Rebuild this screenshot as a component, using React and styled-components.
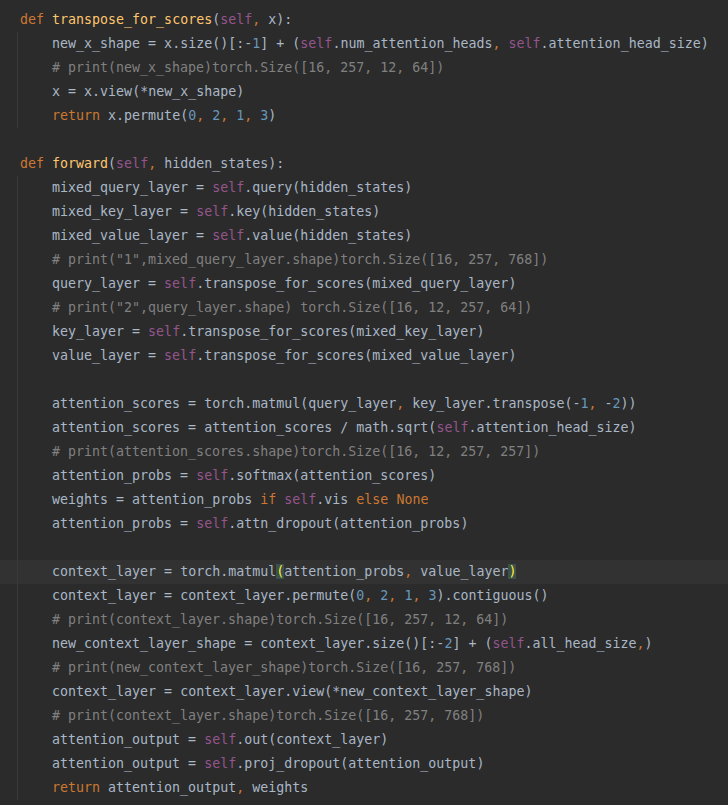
import styled, { createGlobalStyle } from 'styled-components'

const GlobalStyle = createGlobalStyle`
  html, body {
    margin: 0;
    background: #2b2b2b;
  }
`

const colors = {
  text: '#a9b7c6',
  keyword: '#cc7832',
  fn: '#ffc66d',
  self: '#94558d',
  number: '#6897bb',
  comma: '#cc7832',
  comment: '#808080',
  guide: '#393939',
}

const Editor = styled.div`
  width: 728px;
  height: 805px;
  box-sizing: border-box;
  padding-top: 8px;
  display: flex;
  flex-direction: column;
  background: #2b2b2b;
  overflow: hidden;
  font-family: 'DejaVu Sans Mono', 'Liberation Mono', monospace;
  font-size: 13.3px;
  color: ${colors.text};
`

const Line = styled.div`
  height: 24px;
  line-height: 24px;
  white-space: pre;
  padding-left: ${({ $indent }) => 20 + $indent * 32}px;
  background-color: ${({ $current }) => ($current ? '#323232' : 'transparent')};
  background-image: ${({ $guide }) =>
    $guide ? `linear-gradient(${colors.guide}, ${colors.guide})` : 'none'};
  background-size: 1px 100%;
  background-position: 17px 0;
  background-repeat: no-repeat;
`

const Token = styled.span`
  color: ${({ $kind }) => colors[$kind] || colors.text};
`

const Match = styled.span`
  color: #ffef28;
  background: #3b514d;
`

const lines = [
  [0, 'def transpose_for_scores(self, x):'],
  [1, 'new_x_shape = x.size()[:-1] + (self.num_attention_heads, self.attention_head_size)'],
  [1, '# print(new_x_shape)torch.Size([16, 257, 12, 64])'],
  [1, 'x = x.view(*new_x_shape)'],
  [1, 'return x.permute(0, 2, 1, 3)'],
  [-1, ''],
  [0, 'def forward(self, hidden_states):'],
  [1, 'mixed_query_layer = self.query(hidden_states)'],
  [1, 'mixed_key_layer = self.key(hidden_states)'],
  [1, 'mixed_value_layer = self.value(hidden_states)'],
  [1, '# print("1",mixed_query_layer.shape)torch.Size([16, 257, 768])'],
  [1, 'query_layer = self.transpose_for_scores(mixed_query_layer)'],
  [1, '# print("2",query_layer.shape) torch.Size([16, 12, 257, 64])'],
  [1, 'key_layer = self.transpose_for_scores(mixed_key_layer)'],
  [1, 'value_layer = self.transpose_for_scores(mixed_value_layer)'],
  [1, ''],
  [1, 'attention_scores = torch.matmul(query_layer, key_layer.transpose(-1, -2))'],
  [1, 'attention_scores = attention_scores / math.sqrt(self.attention_head_size)'],
  [1, '# print(attention_scores.shape)torch.Size([16, 12, 257, 257])'],
  [1, 'attention_probs = self.softmax(attention_scores)'],
  [1, 'weights = attention_probs if self.vis else None'],
  [1, 'attention_probs = self.attn_dropout(attention_probs)'],
  [1, ''],
  [1, 'context_layer = torch.matmul(attention_probs, value_layer)', [28, 57]],
  [1, 'context_layer = context_layer.permute(0, 2, 1, 3).contiguous()'],
  [1, '# print(context_layer.shape)torch.Size([16, 257, 12, 64])'],
  [1, 'new_context_layer_shape = context_layer.size()[:-2] + (self.all_head_size,)'],
  [1, '# print(new_context_layer_shape)torch.Size([16, 257, 768])'],
  [1, 'context_layer = context_layer.view(*new_context_layer_shape)'],
  [1, '# print(context_layer.shape)torch.Size([16, 257, 768])'],
  [1, 'attention_output = self.out(context_layer)'],
  [1, 'attention_output = self.proj_dropout(attention_output)'],
  [1, 'return attention_output, weights'],
]

const KEYWORDS = ['def', 'return', 'if', 'else', 'None']

// rough python highlighter, enough for this snippet
const tokenize = (code) => {
  if (code.startsWith('#')) return [{ kind: 'comment', text: code }]
  const out = []
  const re = /([A-Za-z_]\w*)|(\d+)|(,)|(\s+)|(.)/g
  let m
  let afterDef = false
  while ((m = re.exec(code))) {
    const [text, word, num, comma] = m
    let kind = 'text'
    if (word) {
      if (KEYWORDS.includes(word)) kind = 'keyword'
      else if (word === 'self') kind = 'self'
      else if (afterDef) kind = 'fn'
      afterDef = word === 'def'
    } else if (num) kind = 'number'
    else if (comma) kind = 'comma'
    out.push({ kind, text, start: m.index })
  }
  return out
}

const CodeLine = ({ indent, code, match }) => {
  const tokens = tokenize(code)
  return (
    <Line $indent={Math.max(indent, 0)} $guide={indent > 0} $current={!!match}>
      {tokens.map((t, i) =>
        match && match.includes(t.start) ? (
          <Match key={i}>{t.text}</Match>
        ) : (
          <Token key={i} $kind={t.kind}>
            {t.text}
          </Token>
        )
      )}
      {code === '' && ' '}
    </Line>
  )
}

export default function App() {
  return (
    <>
      <GlobalStyle />
      <Editor>
        {lines.map(([indent, code, match], i) => (
          <CodeLine key={i} indent={indent} code={code} match={match} />
        ))}
      </Editor>
    </>
  )
}
